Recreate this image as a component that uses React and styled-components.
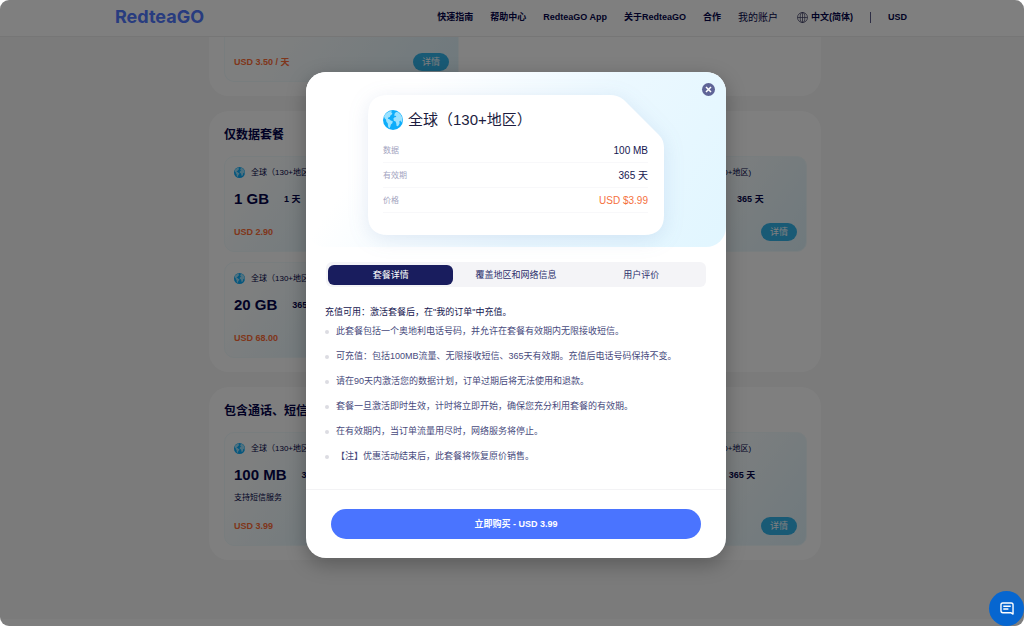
import React, { useState } from 'react'
import styled, { createGlobalStyle, css } from 'styled-components'

const GlobalStyle = createGlobalStyle`
  * {
    box-sizing: border-box;
  }
  body {
    margin: 0;
    background: #fff;
    color: #04044a;
    font-family: 'Liberation Sans', 'Noto Sans CJK SC', sans-serif;
    font-size: 9px;
    line-height: 15px;
  }
  h1, h2, h3, p, ul, dl, dd {
    margin: 0;
    padding: 0;
  }
  button {
    border: 0;
    padding: 0;
    font: inherit;
    cursor: pointer;
  }
  a {
    color: inherit;
    text-decoration: none;
  }
`

const Page = styled.div`
  position: relative;
  height: 100vh;
  overflow: hidden;
  border-radius: 9px;
  background: #f7f7f7;
  display: flex;
  flex-direction: column;
`

const Header = styled.header`
  display: flex;
  align-items: center;
  justify-content: space-between;
  flex: none;
  height: 37px;
  padding: 0 117px 2px 115px;
  background: #fff;
  border-bottom: 1px solid #ececec;
`

const Logo = styled.a`
  font-family: Inter, sans-serif;
  font-size: 18px;
  font-weight: 700;
  line-height: 20px;
  color: #5078ff;
`

const Nav = styled.nav`
  display: flex;
  align-items: center;
  gap: 17px;
  font-weight: 700;
`

const Account = styled.a`
  font-size: 10px;
  font-weight: 400;
`

const Language = styled.a`
  display: flex;
  align-items: center;
  gap: 3px;
  margin-left: 2px;
`

const Divider = styled.span`
  width: 1px;
  height: 11px;
  background: #5a5a88;
`

const Main = styled.main`
  flex: 1 0 auto;
  width: 100%;
  max-width: 618px;
  margin: 0 auto;
  padding-left: 6px;
`

const Section = styled.section`
  margin-bottom: 15px;
  padding: 15px 14px 14px 15px;
  border-radius: 20px;
  background: #fff;
  ${({ $continued }) => $continued && css`
    padding-top: 0;
    border-radius: 0 0 20px 20px;
  `}
  h2 {
    margin-bottom: 12px;
    font-size: 12px;
    line-height: 18px;
  }
`

const PlanGrid = styled.div`
  display: grid;
  grid-template-columns: repeat(4, 1fr);
  gap: 10px;
`

const PlanCard = styled.article`
  display: flex;
  flex-direction: column;
  padding: 8px 9px 10px;
  border: 1px solid #f0fafd;
  border-radius: 10px;
  background: linear-gradient(125deg, #fdffff 20%, #dff3fb 100%);
  ${({ $wide }) => $wide && css`
    width: 235px;
    padding-top: 16px;
    border-top: 0;
    border-radius: 0 0 10px 10px;
  `}
`

const Region = styled.div`
  display: flex;
  align-items: center;
  gap: 6px;
  font-size: 8px;
  white-space: nowrap;
`

const Amount = styled.div`
  display: flex;
  align-items: center;
  gap: 15px;
  margin-top: 9px;
  font-weight: 700;
  white-space: nowrap;
  strong {
    font-size: 15px;
    line-height: 20px;
  }
`

const Support = styled.p`
  margin: 5px 0 -2px;
  font-size: 8px;
`

const PlanFoot = styled.div`
  display: flex;
  align-items: center;
  justify-content: space-between;
  margin-top: ${({ $flush }) => $flush ? 0 : 14}px;
  color: #ff6c36;
  font-weight: 700;
  white-space: nowrap;
`

const DetailButton = styled.button`
  width: 36px;
  height: 18px;
  flex: none;
  border-radius: 9px;
  background: #33b4ea;
  color: #fff;
  font-weight: 400;
`

const Footer = styled.footer`
  flex: none;
  height: 7px;
  background: #fdfdfd;
`

const Overlay = styled.div`
  position: absolute;
  inset: 0;
  display: flex;
  align-items: center;
  justify-content: center;
  padding: 4px 0 0 8px;
  background: rgba(0, 0, 0, .5);
`

const ModalShadow = styled.div`
  width: 100%;
  max-width: 420px;
  border-radius: 20px;
  box-shadow: 0 6px 20px rgba(0, 0, 0, .28);
`

const Modal = styled.div`
  position: relative;
  border-radius: 20px;
  overflow: hidden;
  background: #fff;
`

const Hero = styled.div`
  display: flex;
  justify-content: center;
  padding: 23px 0 12px;
  border-radius: 0 0 20px 20px;
  background: linear-gradient(125deg, #fff 22%, #ebf8ff 60%, #e1f6ff 100%);
`

const CloseButton = styled.button`
  position: absolute;
  top: 11px;
  right: 11px;
  display: grid;
  place-items: center;
  width: 13px;
  height: 13px;
  border-radius: 50%;
  background: #5f6497;
`

const Ticket = styled.div`
  position: relative;
  width: 296px;
  height: 140px;
  padding: 15px 16px 0 15px;
`

const TicketShape = styled.div`
  position: absolute;
  inset: 0;
  filter: drop-shadow(0 4px 10px rgba(60, 100, 170, .13));
  &:before {
    content: '';
    position: absolute;
    inset: 0;
    background: #fff;
    clip-path: path('M20 0H242Q250 0 256 5L291 40Q296 45 296 53V120Q296 140 276 140H20Q0 140 0 120V20Q0 0 20 0Z');
  }
`

const TicketTitle = styled.h1`
  position: relative;
  display: flex;
  align-items: center;
  gap: 5px;
  margin-bottom: 8px;
  font-size: 15px;
  font-weight: 400;
  line-height: 20px;
  color: #1c1c40;
`

const Facts = styled.dl`
  position: relative;
`

const Fact = styled.div`
  display: flex;
  align-items: center;
  justify-content: space-between;
  height: 25px;
  border-bottom: 1px solid #f8f8fa;
  dt {
    font-size: 8px;
    color: #a3a4c0;
  }
  dd {
    font-size: 10px;
    color: ${({ $accent }) => $accent ? '#f5703d' : '#14164f'};
  }
`

const Tabs = styled.div`
  display: grid;
  grid-template-columns: repeat(3, 1fr);
  margin: 15px 20px 0;
  padding: 3px 2px 2px;
  border-radius: 6px;
  background: #f4f4f7;
`

const Tab = styled.button`
  height: 20px;
  border-radius: 6px;
  background: ${({ $active }) => $active ? '#191d5e' : 'transparent'};
  color: ${({ $active }) => $active ? '#fff' : '#2c2f6b'};
`

const Details = styled.div`
  padding: 18px 20px 15px 19px;
  color: #14164f;
`

const Notes = styled.ul`
  margin-top: 4px;
  list-style: none;
  color: #474a7c;
  li {
    display: flex;
    align-items: center;
    gap: 7px;
    margin-bottom: 10px;
    &:before {
      content: '';
      width: 4px;
      height: 4px;
      border-radius: 50%;
      background: #dcdce2;
    }
  }
`

const ModalFoot = styled.div`
  padding: 19px 25px;
  border-top: 1px solid #f3f3f5;
`

const BuyButton = styled.button`
  display: block;
  width: 100%;
  height: 30px;
  border-radius: 15px;
  background: #4a74ff;
  color: #fff;
  font-weight: 700;
`

const ChatButton = styled.button`
  position: absolute;
  right: 0;
  bottom: 0;
  display: grid;
  place-items: center;
  width: 35px;
  height: 35px;
  border-radius: 50%;
  background: #0666d0;
`

const Earth = ({ size }) => (
  <svg width={size} height={size} viewBox="0 0 20 20" aria-hidden="true">
    <circle cx="10" cy="10" r="10" fill="#0cadfb" />
    <path fill="#9be2ff" d="M1 6L3 3.5 6 1.6 9 1 8 2.3 9.4 3 8.8 4.6 7.4 5.4 6.9 7 5.3 7.4 4.9 8.8 6.4 9.2 7.7 10.4 9.8 11.3 9.3 13.2 7.9 14.6 7.2 17 6.2 18.4 5 16.2 4.8 13.4 3.3 11.5 3 9.4 1.6 8.2Z" />
    <path fill="#9be2ff" d="M11.5 3.8L13 2 15.3 2.2 17.6 4.4 19 7 19.4 10.5 18.3 12.6 17.5 10.6 16.4 11.2 16.6 13.4 15 16.2 13.6 16 13.2 13.2 12.6 11.4 10.8 10.8 10.4 8.6 11.6 7.2 13.4 7 12.6 5.8 11.4 6Z" />
  </svg>
)

const GlobeIcon = () => (
  <svg width="11" height="11" viewBox="0 0 22 22" fill="none" stroke="#34345c" strokeWidth="1.4" aria-hidden="true">
    <circle cx="11" cy="11" r="10" />
    <ellipse cx="11" cy="11" rx="4.6" ry="10" />
    <path d="M11 1V21M1 11H21" />
  </svg>
)

const Plan = ({ region = '全球（130+地区）', amount, days, price, support }) => (
  <PlanCard>
    <Region><Earth size={11} />{region}</Region>
    <Amount><strong>{amount}</strong><span>{days} 天</span></Amount>
    {support && <Support>{support}</Support>}
    <PlanFoot>
      <span>USD {price}</span>
      <DetailButton>详情</DetailButton>
    </PlanFoot>
  </PlanCard>
)

const dataPlans = [
  { amount: '1 GB', days: 1, price: '2.90' },
  { amount: '1 GB', days: 7, price: '4.90' },
  { amount: '3 GB', days: 30, price: '15.00' },
  { amount: '10 GB', days: 365, price: '38.00', region: '全球(130+地区)' },
  { amount: '20 GB', days: 365, price: '68.00' },
]

const voicePlans = [
  { amount: '100 MB', days: 365, price: '3.99', support: '支持短信服务' },
  { amount: '1 GB', days: 365, price: '9.99' },
  { amount: '3 GB', days: 365, price: '19.99' },
  { amount: '5 GB', days: 365, price: '29.99', region: '全球(130+地区)' },
]

const tabs = ['套餐详情', '覆盖地区和网络信息', '用户评价']

const notes = [
  '此套餐包括一个奥地利电话号码，并允许在套餐有效期内无限接收短信。',
  '可充值：包括100MB流量、无限接收短信、365天有效期。充值后电话号码保持不变。',
  '请在90天内激活您的数据计划，订单过期后将无法使用和退款。',
  '套餐一旦激活即时生效，计时将立即开始，确保您充分利用套餐的有效期。',
  '在有效期内，当订单流量用尽时，网络服务将停止。',
  '【注】优惠活动结束后，此套餐将恢复原价销售。',
]

const App = () => {
  const [tab, setTab] = useState(0)
  const [open, setOpen] = useState(true)

  return (
    <>
      <GlobalStyle />
      <Page>
        <Header>
          <Logo href="#">RedteaGO</Logo>
          <Nav>
            <a href="#">快速指南</a>
            <a href="#">帮助中心</a>
            <a href="#">RedteaGO App</a>
            <a href="#">关于RedteaGO</a>
            <a href="#">合作</a>
            <Account href="#">我的账户</Account>
            <Language href="#"><GlobeIcon />中文(简体)</Language>
            <Divider />
            <a href="#">USD</a>
          </Nav>
        </Header>
        <Main>
          <Section $continued>
            <PlanCard $wide>
              <PlanFoot $flush>
                <span>USD 3.50 / 天</span>
                <DetailButton>详情</DetailButton>
              </PlanFoot>
            </PlanCard>
          </Section>
          <Section>
            <h2>仅数据套餐</h2>
            <PlanGrid>
              {dataPlans.map((plan) => <Plan key={plan.price} {...plan} />)}
            </PlanGrid>
          </Section>
          <Section>
            <h2>包含通话、短信套餐</h2>
            <PlanGrid>
              {voicePlans.map((plan) => (
                <Plan key={plan.price} {...plan} support={plan.support || '\u00a0'} />
              ))}
            </PlanGrid>
          </Section>
        </Main>
        <Footer />
        {open && (
          <Overlay>
            <ModalShadow>
              <Modal role="dialog" aria-modal="true">
                <Hero>
                  <Ticket>
                    <TicketShape />
                    <TicketTitle><Earth size={20} />全球（130+地区）</TicketTitle>
                    <Facts>
                      <Fact><dt>数据</dt><dd>100 MB</dd></Fact>
                      <Fact><dt>有效期</dt><dd>365 天</dd></Fact>
                      <Fact $accent><dt>价格</dt><dd>USD $3.99</dd></Fact>
                    </Facts>
                  </Ticket>
                </Hero>
                <CloseButton aria-label="关闭" onClick={() => setOpen(false)}>
                  <svg width="7" height="7" viewBox="0 0 14 14" stroke="#fff" strokeWidth="3" aria-hidden="true">
                    <path d="M2 2L12 12M12 2L2 12" />
                  </svg>
                </CloseButton>
                <Tabs role="tablist">
                  {tabs.map((name, i) => (
                    <Tab key={name} role="tab" aria-selected={tab === i} $active={tab === i} onClick={() => setTab(i)}>
                      {name}
                    </Tab>
                  ))}
                </Tabs>
                <Details>
                  <p>充值可用：激活套餐后，在"我的订单"中充值。</p>
                  <Notes>
                    {notes.map((note) => <li key={note}>{note}</li>)}
                  </Notes>
                </Details>
                <ModalFoot>
                  <BuyButton>立即购买 - USD 3.99</BuyButton>
                </ModalFoot>
              </Modal>
            </ModalShadow>
          </Overlay>
        )}
        <ChatButton aria-label="在线客服">
          <svg width="14" height="13" viewBox="0 0 30 28" fill="none" stroke="#fff" strokeWidth="3" aria-hidden="true">
            <path d="M6 2H24Q28 2 28 6V26L23 23H6Q2 23 2 19V6Q2 2 6 2Z" strokeLinejoin="round" />
            <path d="M7 9H23M7 15H18" />
          </svg>
        </ChatButton>
      </Page>
    </>
  )
}

export default App
